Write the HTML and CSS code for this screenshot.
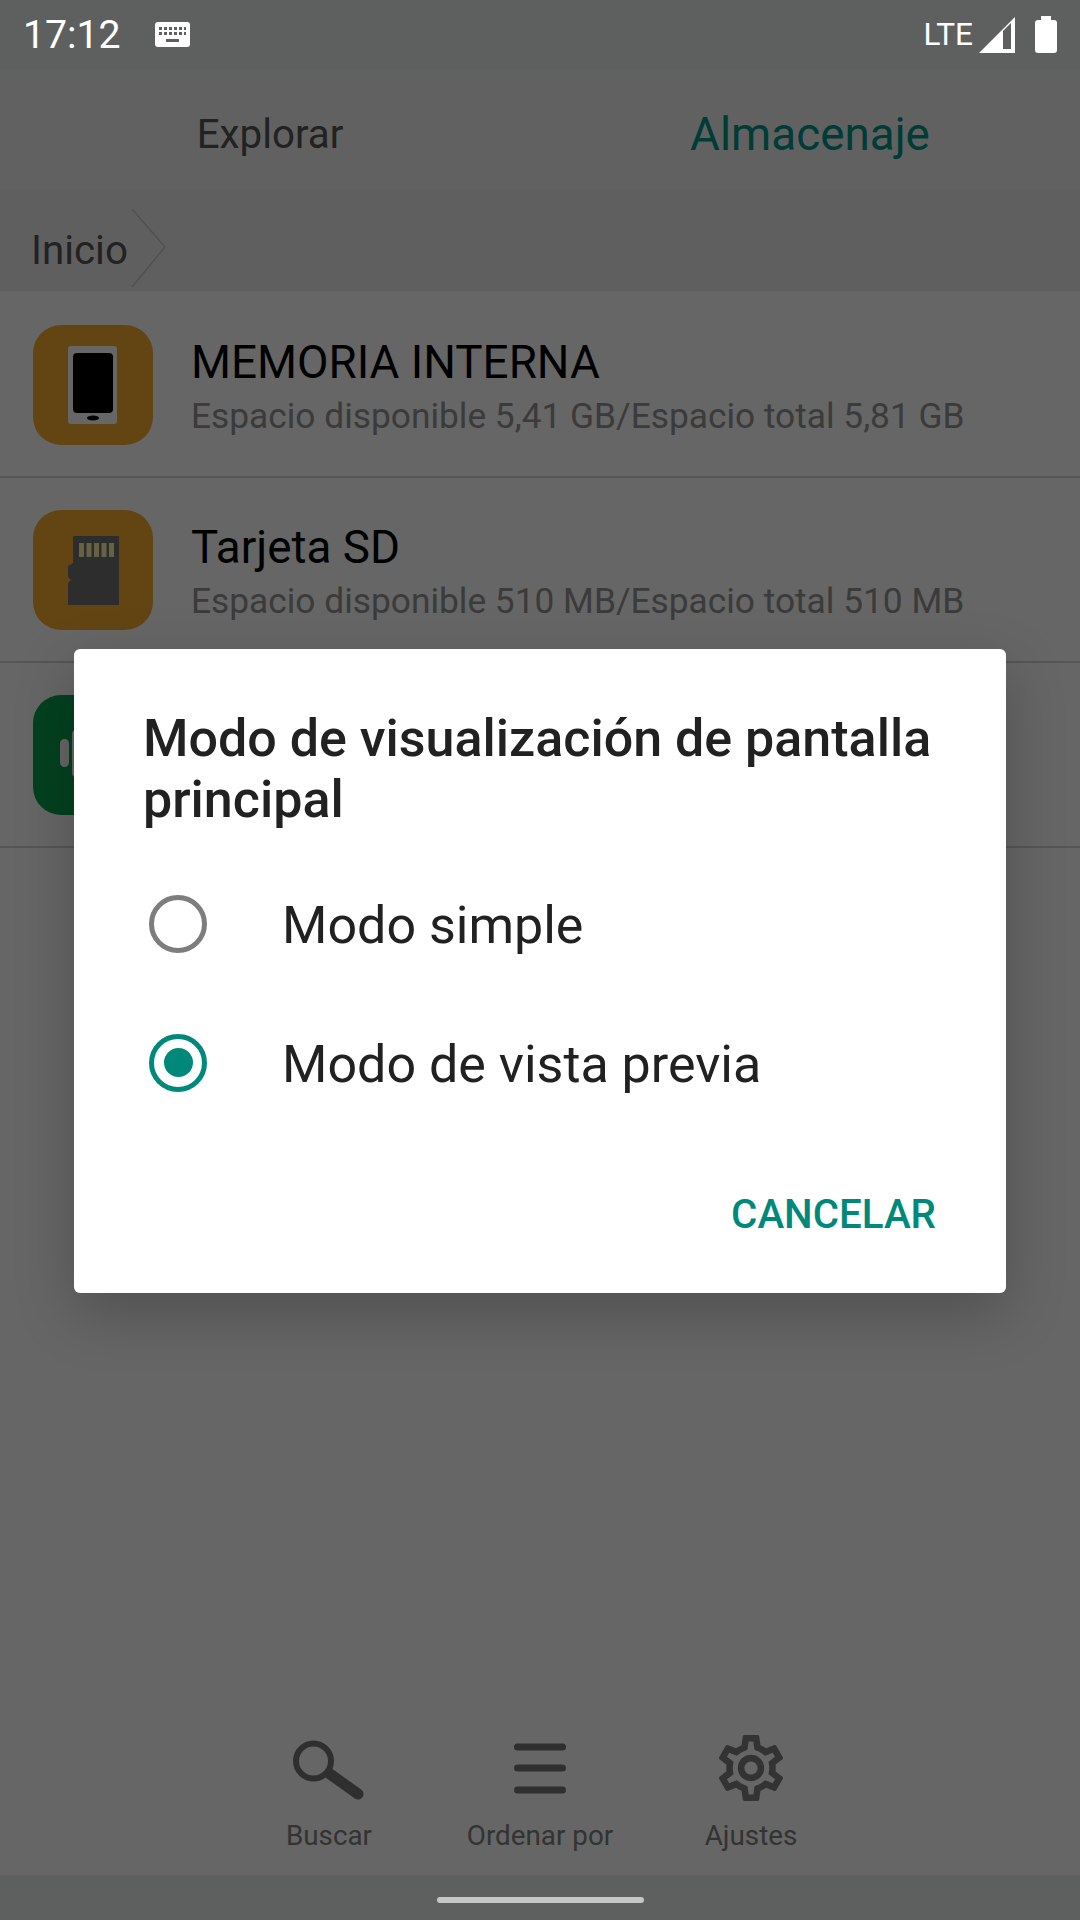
FILE: index.html
```html
<!DOCTYPE html>
<html>
<head>
    <meta charset="utf-8">
    <title>Almacenaje</title>
    <link rel="stylesheet" href="styles.css">
</head>
<body>
    <div class="phone">
        <div class="status-bar">
            <span class="clock">17:12</span>
            <svg class="keyboard-icon" width="35" height="25" viewBox="0 0 35 25">
                <rect width="35" height="25" rx="3" fill="#fff"/>
                <path d="M4 5h3v3H4zM9 5h3v3H9zM14 5h3v3h-3zM19 5h3v3h-3zM24 5h3v3h-3zM29 5h2v3h-2zM4 10h3v3H4zM9 10h3v3H9zM14 10h3v3h-3zM19 10h3v3h-3zM24 10h3v3h-3zM29 10h2v3h-2zM11 17h13v3H11z" fill="#5e605f"/>
            </svg>
            <span class="status-spacer"></span>
            <span class="network">LTE</span>
            <svg class="signal-icon" width="36" height="36" viewBox="0 0 36 36">
                <path d="M36 0V36H0zM24 14V32H32V6z" fill="#fff" fill-rule="evenodd"/>
            </svg>
            <svg class="battery-icon" width="22" height="37" viewBox="0 0 22 37">
                <path d="M6 0h10v4h3a3 3 0 0 1 3 3v27a3 3 0 0 1-3 3H3a3 3 0 0 1-3-3V7a3 3 0 0 1 3-3h3z" fill="#fff"/>
            </svg>
        </div>

        <div class="screen">
            <div class="tabs">
                <div class="tab">Explorar</div>
                <div class="tab tab-active">Almacenaje</div>
            </div>

            <div class="breadcrumb">
                <span class="crumb">Inicio</span>
                <svg class="crumb-arrow" width="36" height="78" viewBox="0 0 36 78">
                    <path d="M1 0L34 38L1 78" fill="none" stroke="#c8c8c8" stroke-width="1.5"/>
                </svg>
            </div>

            <div class="storage-list">
                <div class="storage-row">
                    <div class="storage-icon icon-orange">
                        <svg width="120" height="120" viewBox="0 0 120 120">
                            <rect x="35" y="21" width="49" height="78" rx="3" fill="#fff"/>
                            <rect x="40" y="28" width="40" height="60" rx="4" fill="#000"/>
                            <ellipse cx="60" cy="93" rx="6" ry="2.5" fill="#000"/>
                        </svg>
                    </div>
                    <div class="storage-text">
                        <div class="storage-name">MEMORIA INTERNA</div>
                        <div class="storage-info">Espacio disponible 5,41 GB/Espacio total 5,81 GB</div>
                    </div>
                </div>
                <div class="storage-row">
                    <div class="storage-icon icon-orange">
                        <svg width="120" height="120" viewBox="0 0 120 120">
                            <path d="M41 26H85a1 1 0 0 1 1 1V94a1 1 0 0 1-1 1H36a1 1 0 0 1-1-1V73l3-3-3-3V56l5-3V27a1 1 0 0 1 1-1z" fill="#707070"/>
                            <path d="M46 33h5v14h-5zM53.500 33h5v14h-5zM61 33h5v14h-5zM68.500 33h5v14h-5zM76 33h5v14h-5z" fill="#fff8ac"/>
                        </svg>
                    </div>
                    <div class="storage-text">
                        <div class="storage-name">Tarjeta SD</div>
                        <div class="storage-info">Espacio disponible 510 MB/Espacio total 510 MB</div>
                    </div>
                </div>
                <div class="storage-row">
                    <div class="storage-icon icon-green">
                        <svg width="120" height="120" viewBox="0 0 120 120">
                            <rect x="27" y="44" width="9" height="28" rx="4.500" fill="#fff"/>
                            <rect x="39" y="35" width="42" height="47" rx="4" fill="#fff"/>
                        </svg>
                    </div>
                </div>
            </div>

            <div class="toolbar">
                <div class="tool">
                    <svg class="tool-icon" width="72" height="66" viewBox="0 0 72 66">
                        <circle cx="20.500" cy="26" r="17.500" fill="none" stroke="#777" stroke-width="6"/>
                        <path d="M37 39L65 59" fill="none" stroke="#777" stroke-width="11" stroke-linecap="round"/>
                    </svg>
                    <span class="tool-label">Buscar</span>
                </div>
                <div class="tool">
                    <svg class="tool-icon" width="52" height="66" viewBox="0 0 52 66">
                        <path d="M3.500 12H48.500M3.500 33H48.500M3.500 55H48.500" fill="none" stroke="#777" stroke-width="7" stroke-linecap="round"/>
                    </svg>
                    <span class="tool-label">Ordenar por</span>
                </div>
                <div class="tool">
                    <svg class="tool-icon" width="66" height="66" viewBox="2 2 20 20">
                        <path fill="#808080" d="M19.430 12.980c.04-.32.07-.64.07-.98 0-.34-.03-.66-.07-.98l2.110-1.650c.19-.15.24-.42.12-.64l-2-3.460c-.09-.16-.26-.25-.44-.25-.06 0-.12.01-.17.03l-2.490 1c-.52-.4-1.080-.73-1.690-.98l-.38-2.650C14.460 2.180 14.250 2 14 2h-4c-.25 0-.46.18-.49.42l-.38 2.650c-.61.25-1.170.59-1.690.98l-2.490-1c-.06-.02-.12-.03-.18-.03-.17 0-.34.09-.43.25l-2 3.460c-.13.22-.07.49.12.64l2.110 1.650c-.04.32-.07.65-.07.98 0 .33.03.66.07.98l-2.110 1.650c-.19.15-.24.42-.12.64l2 3.460c.09.16.26.25.44.25.06 0 .12-.01.17-.03l2.490-1c.52.4 1.080.73 1.690.98l.38 2.650c.03.24.24.42.49.42h4c.25 0 .46-.18.49-.42l.38-2.650c.61-.25 1.170-.59 1.690-.98l2.490 1c.06.02.12.03.18.03.17 0 .34-.09.43-.25l2-3.460c.12-.22.07-.49-.12-.64l-2.110-1.650zm-1.980-1.710c.04.31.05.52.05.73 0 .21-.02.43-.05.73l-.14 1.130.89.7 1.080.84-.7 1.210-1.270-.51-1.040-.42-.9.68c-.43.32-.84.56-1.250.73l-1.060.43-.16 1.130-.2 1.350h-1.400l-.19-1.350-.16-1.130-1.060-.43c-.43-.18-.83-.41-1.230-.71l-.91-.7-1.060.43-1.270.51-.7-1.210 1.080-.84.89-.7-.14-1.130c-.03-.31-.05-.54-.05-.74s.02-.43.05-.73l.14-1.130-.89-.7-1.080-.84.7-1.210 1.270.51 1.040.42.9-.68c.43-.32.84-.56 1.250-.73l1.060-.43.16-1.130.2-1.350h1.390l.19 1.350.16 1.130 1.060.43c.43.18.83.41 1.230.71l.91.7 1.060-.43 1.270-.51.7 1.210-1.070.85-.89.7.14 1.130zM12 8c-2.210 0-4 1.790-4 4s1.790 4 4 4 4-1.790 4-4-1.790-4-4-4zm0 6c-1.100 0-2-.9-2-2s.9-2 2-2 2 .9 2 2-.9 2-2 2z"/>
                    </svg>
                    <span class="tool-label">Ajustes</span>
                </div>
            </div>

            <div class="scrim">
                <div class="dialog">
                    <div class="dialog-title">Modo de visualización de pantalla principal</div>
                    <div class="option">
                        <span class="radio"></span>
                        <span class="option-label">Modo simple</span>
                    </div>
                    <div class="option">
                        <span class="radio radio-checked"></span>
                        <span class="option-label">Modo de vista previa</span>
                    </div>
                    <div class="dialog-actions">
                        <span class="dialog-btn">CANCELAR</span>
                    </div>
                </div>
            </div>
        </div>

        <div class="nav-bar">
            <span class="home-pill"></span>
        </div>
    </div>
</body>
</html>
```

FILE: styles.css
```css
* {
    box-sizing: border-box;
}

body {
    margin: 0;
    font-family: Roboto, "Liberation Sans", sans-serif;
    background: #fff;
}

.phone {
    width: 1080px;
    height: 1920px;
    display: flex;
    flex-direction: column;
    overflow: hidden;
}

/* Status bar */
.status-bar {
    height: 69px;
    flex-shrink: 0;
    display: flex;
    align-items: center;
    padding: 0 23px 0 23px;
    background: #5e605f;
    color: #fff;
}

.clock {
    font-size: 39.2px;
    width: 132px;
}

.status-spacer {
    flex: 1;
}

.network {
    font-size: 31.5px;
    margin-right: 6px;
}

.signal-icon {
    margin-right: 20px;
}

/* Main screen, dimmed by the scrim */
.screen {
    position: relative;
    flex: 1;
    display: flex;
    flex-direction: column;
}

.tabs {
    height: 121px;
    padding-top: 10px;
    display: grid;
    grid-template-columns: 1fr 1fr;
    align-items: center;
    background: #f3f3f3;
}

.tab {
    text-align: center;
    font-size: 40.3px;
    color: #555;
}

.tab-active {
    font-size: 45.8px;
    color: #009688;
}

.breadcrumb {
    height: 101px;
    display: flex;
    align-items: center;
    padding-left: 31px;
    background: #eeeeee;
}

.crumb {
    font-size: 40.3px;
    color: #555;
    padding-top: 20px;
}

.crumb-arrow {
    margin: 14px 0 0 3px;
}

.storage-list {
    flex: 1;
    padding-top: 2px;
    background: #fff;
}

.storage-row {
    height: 185px;
    display: flex;
    align-items: center;
    padding-left: 33px;
    border-bottom: 2px solid #d8d8d8;
}

.storage-icon {
    width: 120px;
    height: 120px;
    border-radius: 28px;
    flex-shrink: 0;
}

.icon-orange {
    background: #f8ac32;
}

.icon-green {
    background: #08a452;
}

.storage-text {
    margin: 10px 0 0 38px;
}

.storage-name {
    font-size: 45.8px;
    line-height: 55px;
    color: #000;
}

.storage-info {
    margin-top: -1px;
    font-size: 35.3px;
    line-height: 55px;
    color: #949494;
}

/* Bottom toolbar */
.toolbar {
    height: 140px;
    flex-shrink: 0;
    display: flex;
    justify-content: center;
    background: #fff;
}

.tool {
    width: 211px;
    display: flex;
    flex-direction: column;
    align-items: center;
}

.tool-icon {
    height: 66px;
}

.tool-label {
    margin-top: 15px;
    font-size: 27.8px;
    line-height: 40px;
    color: #808080;
}

/* Dialog */
.scrim {
    position: absolute;
    inset: 0;
    display: flex;
    justify-content: center;
    align-items: flex-start;
    padding-top: 580px;
    background: rgba(0, 0, 0, 0.6);
}

.dialog {
    width: 932px;
    height: 644px;
    padding-top: 59px;
    background: #fff;
    border-radius: 6px;
    box-shadow: 0 20px 60px rgba(0, 0, 0, 0.22);
}

.dialog-title {
    padding: 0 40px 0 69px;
    margin-bottom: 25px;
    font-size: 52px;
    line-height: 61px;
    font-weight: 500;
    color: #212121;
}

.option {
    height: 138.5px;
    display: flex;
    align-items: center;
    padding-left: 75px;
}

.radio {
    width: 58px;
    height: 58px;
    border: 5px solid #7d7d7d;
    border-radius: 50%;
    flex-shrink: 0;
    display: flex;
    align-items: center;
    justify-content: center;
}

.radio-checked {
    border-color: #00897b;
}

.radio-checked::after {
    content: "";
    width: 29px;
    height: 29px;
    border-radius: 50%;
    background: #00897b;
}

.option-label {
    margin-left: 75px;
    padding-top: 3px;
    font-size: 52px;
    color: #212121;
}

.dialog-actions {
    display: flex;
    justify-content: flex-end;
    margin-top: 58px;
    padding-right: 70px;
}

.dialog-btn {
    font-size: 40.3px;
    line-height: 50px;
    font-weight: 500;
    color: #00897b;
}

/* Navigation bar */
.nav-bar {
    height: 45px;
    flex-shrink: 0;
    display: flex;
    justify-content: center;
    padding-top: 22px;
    background: #5e605f;
}

.home-pill {
    width: 207px;
    height: 6px;
    border-radius: 3px;
    background: #c5c7c6;
}
```
